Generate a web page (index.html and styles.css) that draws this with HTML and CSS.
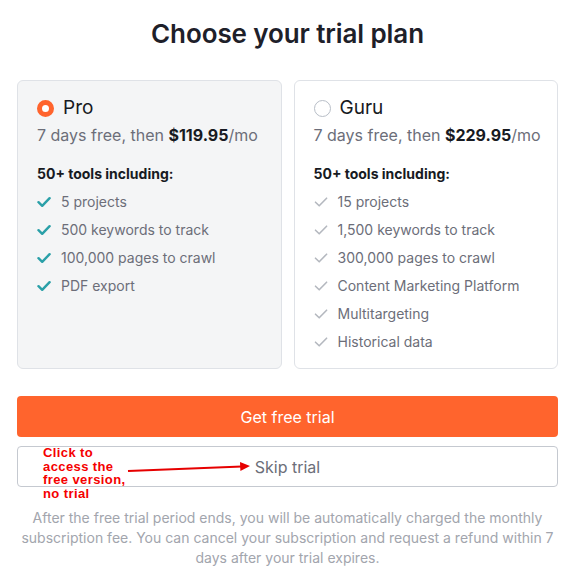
FILE: index.html
```html
<!DOCTYPE html>
<html lang="en">
<head>
<meta charset="utf-8">
<title>Choose your trial plan</title>
<link rel="stylesheet" href="styles.css">
</head>
<body>
<main class="page">
  <h1 class="title">Choose your trial plan</h1>

  <div class="plans">
    <section class="plan plan--selected">
      <div class="plan__head">
        <span class="radio radio--on"></span>
        <span class="plan__name">Pro</span>
      </div>
      <div class="plan__price">7 days free, then <b>$119.95</b>/mo</div>
      <div class="plan__sub">50+ tools including:</div>
      <ul class="features features--active">
        <li><svg class="check" viewBox="0 0 14 12"><path d="M1.5 6.2 L5.2 9.8 L12.6 2.2"/></svg>5 projects</li>
        <li><svg class="check" viewBox="0 0 14 12"><path d="M1.5 6.2 L5.2 9.8 L12.6 2.2"/></svg>500 keywords to track</li>
        <li><svg class="check" viewBox="0 0 14 12"><path d="M1.5 6.2 L5.2 9.8 L12.6 2.2"/></svg>100,000 pages to crawl</li>
        <li><svg class="check" viewBox="0 0 14 12"><path d="M1.5 6.2 L5.2 9.8 L12.6 2.2"/></svg>PDF export</li>
      </ul>
    </section>

    <section class="plan">
      <div class="plan__head">
        <span class="radio"></span>
        <span class="plan__name">Guru</span>
      </div>
      <div class="plan__price">7 days free, then <b>$229.95</b>/mo</div>
      <div class="plan__sub">50+ tools including:</div>
      <ul class="features">
        <li><svg class="check" viewBox="0 0 14 12"><path d="M1.5 6.2 L5.2 9.8 L12.6 2.2"/></svg>15 projects</li>
        <li><svg class="check" viewBox="0 0 14 12"><path d="M1.5 6.2 L5.2 9.8 L12.6 2.2"/></svg>1,500 keywords to track</li>
        <li><svg class="check" viewBox="0 0 14 12"><path d="M1.5 6.2 L5.2 9.8 L12.6 2.2"/></svg>300,000 pages to crawl</li>
        <li><svg class="check" viewBox="0 0 14 12"><path d="M1.5 6.2 L5.2 9.8 L12.6 2.2"/></svg>Content Marketing Platform</li>
        <li><svg class="check" viewBox="0 0 14 12"><path d="M1.5 6.2 L5.2 9.8 L12.6 2.2"/></svg>Multitargeting</li>
        <li><svg class="check" viewBox="0 0 14 12"><path d="M1.5 6.2 L5.2 9.8 L12.6 2.2"/></svg>Historical data</li>
      </ul>
    </section>
  </div>

  <button class="btn btn--primary">Get free trial</button>
  <div class="skip-wrap">
    <button class="btn btn--secondary">Skip trial</button>
    <div class="note">Click to<br>access the<br>free version,<br>no trial</div>
    <svg class="note-arrow" viewBox="0 0 130 12" width="130" height="12">
      <line x1="1" y1="9" x2="115" y2="4.4" />
      <polygon points="123,4 113,0 113.4,9" />
    </svg>
  </div>

  <p class="disclaimer">After the free trial period ends, you will be automatically charged the monthly subscription fee. You can cancel your subscription and request a refund within 7 days after your trial expires.</p>
</main>
</body>
</html>
```

FILE: styles.css
```css
* { box-sizing: border-box; }

html, body {
  margin: 0;
  padding: 0;
  background: #ffffff;
}

body {
  font-family: Inter, "Noto Sans", "Liberation Sans", sans-serif;
  color: #171a22;
}

.page {
  width: 541px;
  margin: 0 auto;
  padding-top: 18px;
}

.title {
  margin: 0;
  font-size: 26px;
  line-height: 32px;
  font-weight: 600;
  text-align: center;
  color: #1e2029;
  letter-spacing: -0.1px;
}

.plans {
  margin-top: 30px;
  display: grid;
  grid-template-columns: 1fr 1fr;
  gap: 12px;
}

.plan {
  border: 1px solid #dfe2e7;
  border-radius: 6px;
  background: #ffffff;
  padding: 15px 16px 12px 19px;
}

.plan--selected {
  background: #f4f5f6;
}

.plan__head {
  display: flex;
  align-items: center;
  gap: 9px;
  height: 24px;
}

.radio {
  width: 17px;
  height: 17px;
  border-radius: 50%;
  border: 1px solid #b8bec7;
  background: #ffffff;
  flex: none;
}

.radio--on {
  border: 5.5px solid #ff642d;
  background: #ffffff;
}

.plan__name {
  font-size: 19px;
  line-height: 24px;
  font-weight: 400;
  color: #171a22;
}

.plan__price {
  margin-top: 4px;
  font-size: 16px;
  line-height: 22px;
  color: #6c6e79;
  white-space: nowrap;
}

.plan__price b {
  font-weight: 700;
  color: #171a22;
}

.plan__sub {
  margin-top: 18px;
  font-size: 14px;
  line-height: 20px;
  font-weight: 700;
  color: #171a22;
}

.features {
  list-style: none;
  margin: 4px 0 0;
  padding: 0;
}

.features li {
  display: flex;
  align-items: center;
  gap: 10px;
  font-size: 14px;
  line-height: 28px;
  color: #6c6e79;
}

.check {
  width: 14px;
  height: 12px;
  flex: none;
  fill: none;
  stroke: #b4b8bf;
  stroke-width: 1.6;
  stroke-linecap: round;
  stroke-linejoin: round;
}

.features--active .check {
  stroke: #2aa0a8;
  stroke-width: 2.4;
}

.btn {
  display: block;
  width: 100%;
  height: 41px;
  border-radius: 4px;
  font-family: inherit;
  font-size: 16px;
  cursor: pointer;
}

.btn--primary {
  margin-top: 27px;
  border: none;
  background: #ff642d;
  color: #ffffff;
}

.skip-wrap {
  position: relative;
  margin-top: 9px;
}

.btn--secondary {
  background: #ffffff;
  border: 1px solid #c5c9d0;
  color: #6c6e79;
}

.note {
  position: absolute;
  left: 26px;
  top: 0;
  font-family: "Liberation Sans", Arial, sans-serif;
  font-weight: 700;
  font-size: 13px;
  line-height: 13.6px;
  letter-spacing: 0.4px;
  color: #f50000;
}

.note-arrow {
  position: absolute;
  left: 110px;
  top: 16px;
}

.note-arrow line {
  stroke: #e60000;
  stroke-width: 2;
}

.note-arrow polygon {
  fill: #e60000;
}

.disclaimer {
  margin: 21px 0 0;
  font-size: 14px;
  line-height: 20px;
  text-align: center;
  color: #a2a5ad;
}
```
